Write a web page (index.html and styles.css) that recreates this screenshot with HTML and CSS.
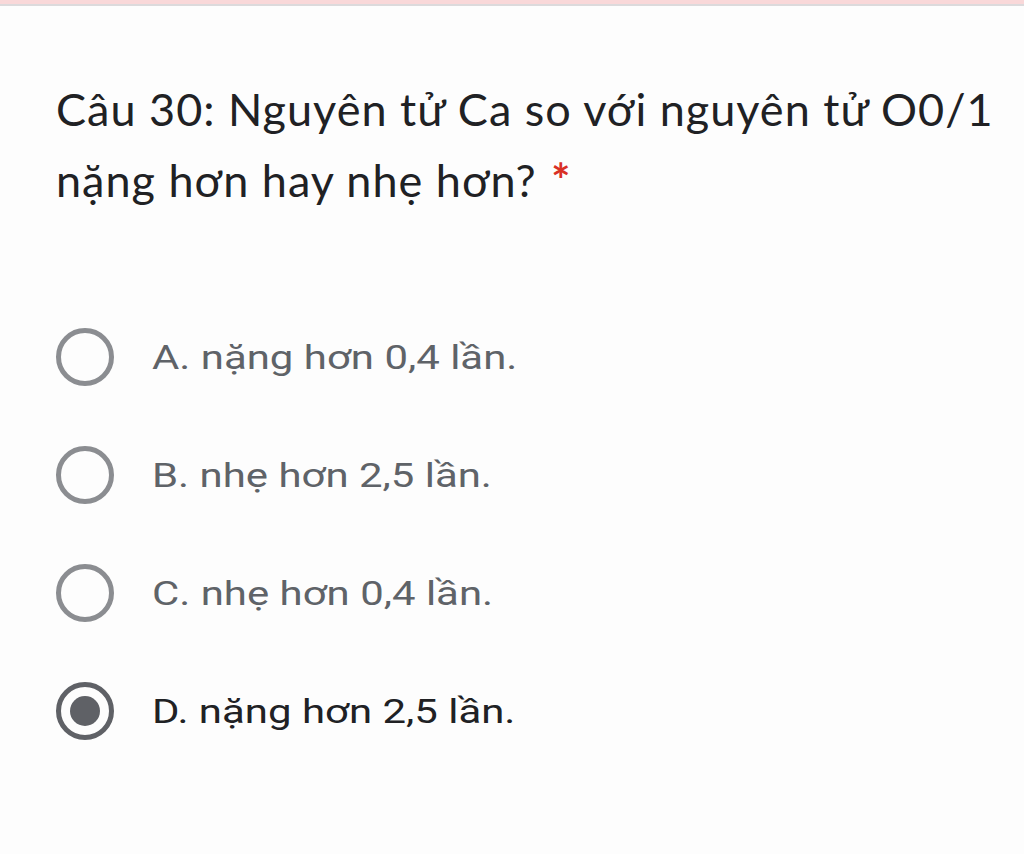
FILE: index.html
```html
<!DOCTYPE html>
<html lang="vi">
<head>
<meta charset="utf-8">
<link rel="stylesheet" href="styles.css">
</head>
<body>
<div class="topbar"></div>
<main class="question">
  <h1 class="title">Câu 30: Nguyên tử Ca so với nguyên tử O0/1 nặng hơn hay nhẹ hơn? <span class="req">*</span></h1>
  <ul class="options">
    <li class="option"><span class="radio"></span><span class="label">A. nặng hơn 0,4 lần.</span></li>
    <li class="option"><span class="radio"></span><span class="label">B. nhẹ hơn 2,5 lần.</span></li>
    <li class="option"><span class="radio"></span><span class="label">C. nhẹ hơn 0,4 lần.</span></li>
    <li class="option checked"><span class="radio"></span><span class="label">D. nặng hơn 2,5 lần.</span></li>
  </ul>
</main>
</body>
</html>
```
FILE: styles.css
```css
html, body {
  margin: 0;
  padding: 0;
  background: #fdfdfd;
}
body {
  width: 1024px;
  height: 854px;
  overflow: hidden;
}
.topbar {
  height: 4px;
  background: #f9d8d9;
  border-bottom: 2px solid #dcdadc;
}
.question {
  padding: 0 10px 0 56px;
}
.title {
  margin: 68px 0 0 0;
  font-family: "Lato", "Open Sans", sans-serif;
  font-weight: 400;
  font-size: 45px;
  letter-spacing: 1px;
  line-height: 71px;
  color: #202124;
  width: 958px;
}
.req {
  color: #d93025;
  font-weight: 700;
  letter-spacing: 0;
  margin-left: 2px;
}
.options {
  list-style: none;
  margin: 82px 0 0 0;
  padding: 0;
}
.option {
  height: 118px;
  display: flex;
  align-items: center;
  gap: 38px;
}
.radio {
  box-sizing: border-box;
  width: 58px;
  height: 58px;
  border-radius: 50%;
  border: 5px solid #8b8d91;
  flex: none;
  display: flex;
  align-items: center;
  justify-content: center;
}
.checked .radio {
  border-color: #5f6166;
}
.checked .radio::after {
  content: "";
  width: 30px;
  height: 30px;
  border-radius: 50%;
  background: #5f6166;
}
.label {
  display: inline-block;
  font-family: "Roboto", sans-serif;
  font-size: 33px;
  color: #5f6368;
  transform: scaleX(1.27);
  transform-origin: left center;
}
.checked .label {
  color: #202124;
}
```
